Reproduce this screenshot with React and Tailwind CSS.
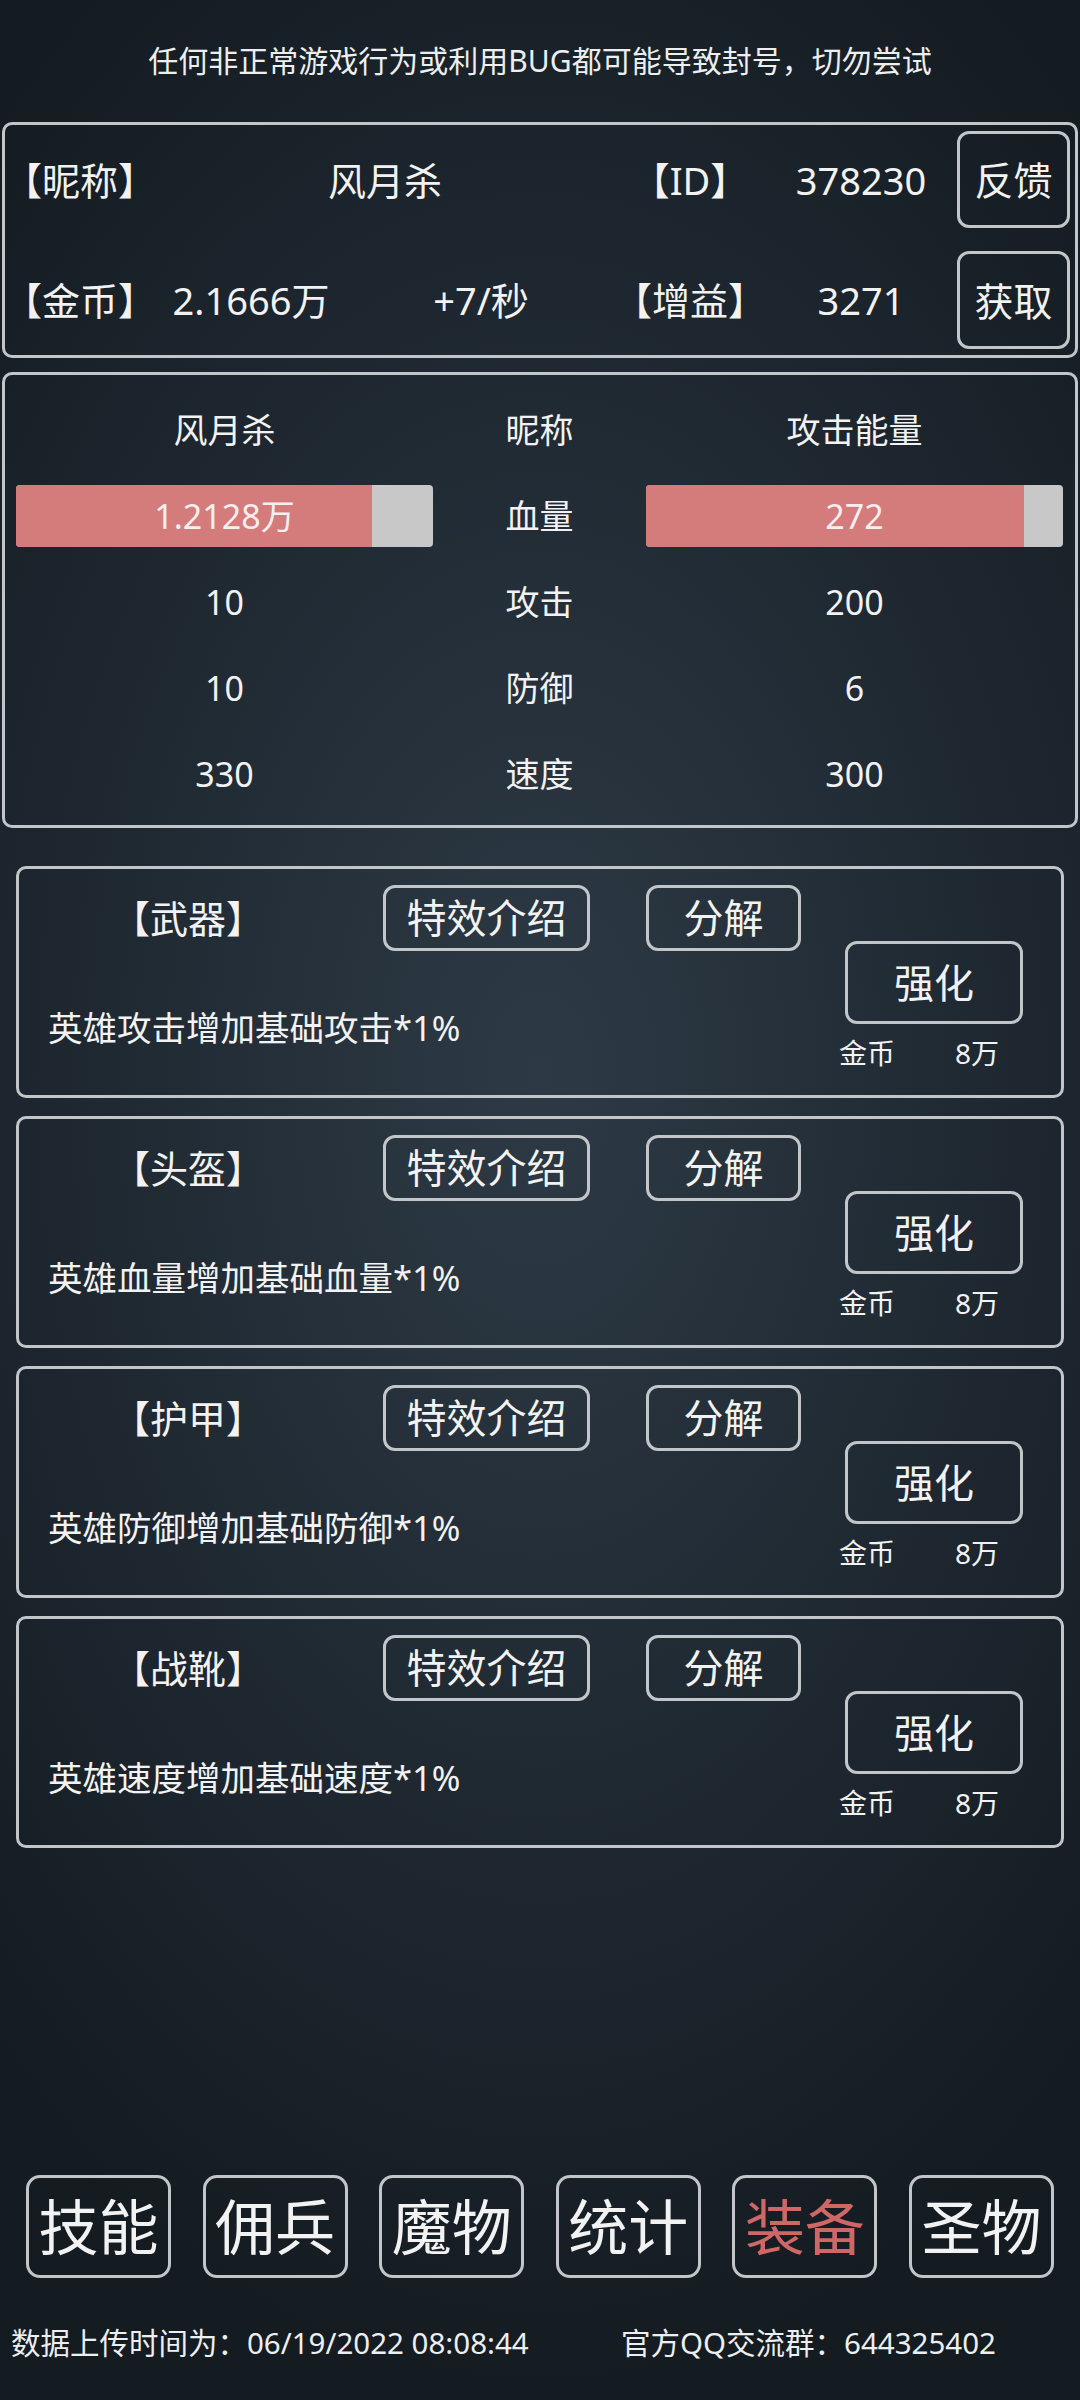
import React from "react";

const Btn = ({ className = "", children, red = false }) => (
  <div
    className={`flex items-center justify-center border-[3px] border-[#c3c6c9] whitespace-nowrap leading-none ${
      red ? "text-[#d06767]" : "text-[#f2f2f2]"
    } ${className}`}
  >
    {children}
  </div>
);

const Cell = ({ children, className = "" }) => (
  <div className={`flex justify-center items-center whitespace-nowrap leading-none ${className}`}>
    {children}
  </div>
);

const Bar = ({ pctClass, text }) => (
  <div className="grid h-[62px] w-full rounded-[4px] overflow-hidden bg-[#c8c8c8]">
    <div className="[grid-area:1/1] h-full flex">
      <div className={`h-full bg-[#d47b7b] ${pctClass}`} />
    </div>
    <div className="[grid-area:1/1] flex items-center justify-center text-[34px] leading-none text-[#f7eeee]">
      {text}
    </div>
  </div>
);

const cards = [
  { name: "【武器】", desc: "英雄攻击增加基础攻击*1%" },
  { name: "【头盔】", desc: "英雄血量增加基础血量*1%" },
  { name: "【护甲】", desc: "英雄防御增加基础防御*1%" },
  { name: "【战靴】", desc: "英雄速度增加基础速度*1%" },
];

const nav = ["技能", "佣兵", "魔物", "统计", "装备", "圣物"];

export default function App() {
  return (
    <div className="w-[1080px] h-[2400px] overflow-hidden text-[#f2f2f2] font-['Noto_Sans','Noto_Sans_CJK_SC',sans-serif] bg-[radial-gradient(ellipse_75%_55%_at_50%_45%,#2d3a45_0%,#1e2730_60%,#141b21_100%)] flex flex-col">
      {/* notice */}
      <div className="h-[122px] flex items-center justify-center text-[30px] leading-none text-[#eceef0] whitespace-nowrap">
        任何非正常游戏行为或利用BUG都可能导致封号，切勿尝试
      </div>

      {/* panel 1 */}
      <div className="mx-[2px] h-[236px] border-[3px] border-[#c3c6c9] rounded-[10px] pt-[6px] pb-[6px] flex flex-col justify-between">
        <div className="grid grid-cols-[150px_460px_150px_192px_113px] h-[97px] items-center text-[38px]">
          <Cell>【昵称】</Cell>
          <Cell>风月杀</Cell>
          <Cell>【ID】</Cell>
          <Cell>378230</Cell>
          <Btn className="h-[97px] w-[113px] rounded-[12px] text-[39px]">反馈</Btn>
        </div>
        <div className="grid grid-cols-[150px_192px_268px_150px_192px_113px] h-[98px] items-center text-[38px]">
          <Cell>【金币】</Cell>
          <Cell>2.1666万</Cell>
          <Cell>+7/秒</Cell>
          <Cell>【增益】</Cell>
          <Cell>3271</Cell>
          <Btn className="h-[98px] w-[113px] rounded-[12px] text-[39px]">获取</Btn>
        </div>
      </div>

      {/* panel 2 */}
      <div className="mt-[14px] mx-[2px] h-[456px] border-[3px] border-[#c3c6c9] rounded-[10px] px-[11px] pt-[12px]">
        <div className="grid grid-cols-[417px_213px_417px] auto-rows-[86px] items-center text-[34px]">
          <Cell>风月杀</Cell>
          <Cell>昵称</Cell>
          <Cell>攻击能量</Cell>

          <Bar pctClass="w-[85.4%]" text="1.2128万" />
          <Cell>血量</Cell>
          <Bar pctClass="w-[90.6%]" text="272" />

          <Cell>10</Cell>
          <Cell>攻击</Cell>
          <Cell>200</Cell>

          <Cell>10</Cell>
          <Cell>防御</Cell>
          <Cell>6</Cell>

          <Cell>330</Cell>
          <Cell>速度</Cell>
          <Cell>300</Cell>
        </div>
      </div>

      {/* equipment cards */}
      <div className="mt-[38px] mx-[16px] flex flex-col gap-[18px]">
        {cards.map((c) => (
          <div
            key={c.name}
            className="h-[232px] border-[3px] border-[#c3c6c9] rounded-[10px] flex items-start"
          >
            <div className="w-[782px] flex flex-col">
              <div className="mt-[16px] h-[66px] flex items-center">
                <Cell className="w-[338px] text-[38px]">{c.name}</Cell>
                <Btn className="ml-[26px] w-[207px] h-[66px] rounded-[12px] text-[40px]">特效介绍</Btn>
                <Btn className="ml-[56px] w-[155px] h-[66px] rounded-[12px] text-[40px]">分解</Btn>
              </div>
              <div className="mt-[57px] pl-[29px] text-[34.5px] leading-[40px] whitespace-nowrap">
                {c.desc}
              </div>
            </div>
            <div className="ml-[44px] w-[178px] flex flex-col">
              <Btn className="mt-[72px] h-[83px] w-[178px] rounded-[12px] text-[40px]">强化</Btn>
              <div className="mt-[12px] -ml-[6px] flex text-[28px] leading-[34px] whitespace-nowrap">
                <span>金币</span>
                <span className="ml-[60px]">8万</span>
              </div>
            </div>
          </div>
        ))}
      </div>

      {/* bottom nav */}
      <div className="mt-[327px] px-[26px] flex justify-between">
        {nav.map((n) => (
          <Btn
            key={n}
            red={n === "装备"}
            className="w-[145px] h-[103px] rounded-[14px] text-[60px]"
          >
            {n}
          </Btn>
        ))}
      </div>

      {/* footer */}
      <div className="mt-[45px] pl-[11px] flex text-[29.5px] leading-[40px] whitespace-nowrap text-[#eceef0]">
        <span className="w-[610px]">数据上传时间为：06/19/2022 08:08:44</span>
        <span>官方QQ交流群：644325402</span>
      </div>
    </div>
  );
}
